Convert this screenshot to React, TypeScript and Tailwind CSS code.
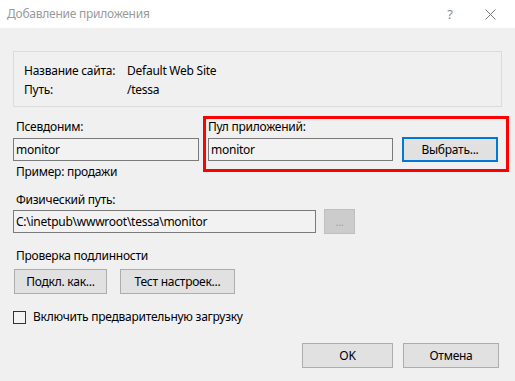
import type { ReactNode } from "react";

const font = { fontFamily: '"Noto Sans", "Open Sans", sans-serif' };

function Field({ value, className }: { value: string; className: string }) {
  return (
    <div
      className={`h-[23px] bg-[#f2f2f2] border border-[#7a7a7a] pl-[2px] flex items-center text-[12px] text-black ${className}`}
    >
      {value}
    </div>
  );
}

function Button({
  children,
  className,
  focused,
}: {
  children: ReactNode;
  className: string;
  focused?: boolean;
}) {
  return (
    <button
      className={`h-[25px] bg-[#e1e1e1] flex items-center justify-center text-[12px] text-black ${
        focused ? "border-2 border-[#0078d7]" : "border border-[#adadad]"
      } ${className}`}
    >
      {children}
    </button>
  );
}

export default function App() {
  return (
    <div
      className="w-[515px] h-[381px] bg-[#f0f0f0] overflow-hidden text-[12px] leading-[16px] tracking-[-0.25px] text-black"
      style={font}
    >
      {/* title bar */}
      <div className="h-[28px] bg-white flex items-center pl-[7px] pr-[17px]">
        <span className="text-[#9a9a9a] text-[12px]">Добавление приложения</span>
        <span className="ml-auto text-[#8a8a8a] text-[13px] w-[10px] text-center mr-[30px]">?</span>
        <svg width="11" height="11" viewBox="0 0 11 11" className="mr-[2px]">
          <path d="M0.5 0.5L10.5 10.5M10.5 0.5L0.5 10.5" stroke="#777" strokeWidth="1" fill="none" />
        </svg>
      </div>

      <div className="px-[13px]">
        {/* site info group */}
        <div className="mt-[23px] h-[56px] border border-[#dcdcdc] pl-[10px] pt-[9px]">
          <div className="flex h-[19px] items-center">
            <span className="w-[103px]">Название сайта:</span>
            <span>Default Web Site</span>
          </div>
          <div className="flex h-[19px] items-center">
            <span className="w-[103px]">Путь:</span>
            <span>/tessa</span>
          </div>
        </div>

        {/* alias + pool */}
        <div className="mt-[9px] flex items-start">
          <div className="w-[186px] pt-[3px]">
            <div className="pl-[3px] h-[16px]">Псевдоним:</div>
            <Field value="monitor" className="mt-[3px] w-[186px]" />
            <div className="pl-[3px] h-[16px] mt-[3px]">Пример: продажи</div>
          </div>
          <div className="ml-[4px] w-[306px] h-[56px] border-[3px] border-[#ff0000] pl-[2px] pr-[8px]">
            <div className="h-[16px]">Пул приложений:</div>
            <div className="mt-[2px] flex items-center h-[25px]">
              <Field value="monitor" className="w-[185px]" />
              <Button className="ml-[9px] w-[96px]" focused>
                Выбрать...
              </Button>
            </div>
          </div>
        </div>

        {/* physical path */}
        <div className="mt-[12px] pl-[3px] h-[16px]">Физический путь:</div>
        <div className="mt-[1px] flex items-center h-[25px]">
          <Field value="C:\inetpub\wwwroot\tessa\monitor" className="w-[303px]" />
          <div className="ml-[8px] w-[31px] h-[25px] bg-[#cccccc] border border-[#bfbfbf] flex items-center justify-center text-[#a0a0a0] text-[11px]">
            ...
          </div>
        </div>

        {/* authentication */}
        <div className="mt-[14px] pl-[3px] h-[16px]">Проверка подлинности</div>
        <div className="mt-[5px] flex">
          <Button className="ml-[1px] w-[93px]">Подкл. как...</Button>
          <Button className="ml-[13px] w-[115px]">Тест настроек...</Button>
        </div>

        {/* preload */}
        <div className="mt-[15px] flex items-center h-[16px]">
          <div className="w-[13px] h-[13px] bg-[#f4f4f4] border border-[#333333]" />
          <span className="ml-[7px]">Включить предварительную загрузку</span>
        </div>

        {/* dialog buttons */}
        <div className="mt-[18px] flex justify-end pr-[3px]">
          <Button className="w-[91px]">OK</Button>
          <Button className="ml-[10px] w-[96px]">Отмена</Button>
        </div>
      </div>
    </div>
  );
}
